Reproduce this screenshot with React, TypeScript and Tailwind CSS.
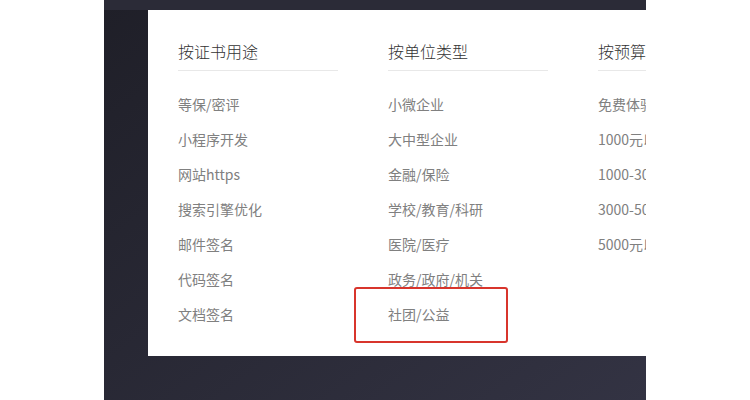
import React from "react";

const cols = [
  {
    title: "按证书用途",
    items: ["等保/密评", "小程序开发", "网站https", "搜索引擎优化", "邮件签名", "代码签名", "文档签名"],
  },
  {
    title: "按单位类型",
    items: ["小微企业", "大中型企业", "金融/保险", "学校/教育/科研", "医院/医疗", "政务/政府/机关", "社团/公益"],
  },
  {
    title: "按预算",
    items: ["免费体验", "1000元以下", "1000-3000元", "3000-5000元", "5000元以上"],
  },
];

export default function App() {
  return (
    <div
      className="w-[750px] h-[400px] bg-white overflow-hidden"
      style={{ fontFamily: '"Noto Sans CJK SC", "Noto Sans", sans-serif' }}
    >
      <div className="ml-[104px] w-[542px] h-[400px] overflow-hidden bg-gradient-to-br from-[#1f1f28] to-[#333343]">
        <div className="h-[10px] bg-[#2b2b37]" />
        <div className="relative ml-[44px] w-[600px] h-[346px] bg-white pt-[28px] pl-[30px]">
          <div className="flex gap-[50px]">
            {cols.map((c) => (
              <div key={c.title} className="w-[160px] shrink-0">
                <div className="text-[16px] leading-[26px] text-[#333] font-light pb-[6px] border-b border-[#e8e8e8] whitespace-nowrap">
                  {c.title}
                </div>
                <div className="mt-[16px]">
                  {c.items.map((it) => (
                    <div key={it} className="h-[35px] leading-[35px] text-[14px] text-[#808080] whitespace-nowrap">
                      {it}
                    </div>
                  ))}
                </div>
              </div>
            ))}
          </div>
          <div className="absolute left-[206px] top-[277px] w-[154px] h-[56px] border-2 border-[#d8352c] rounded-[3px]" />
        </div>
      </div>
    </div>
  );
}
